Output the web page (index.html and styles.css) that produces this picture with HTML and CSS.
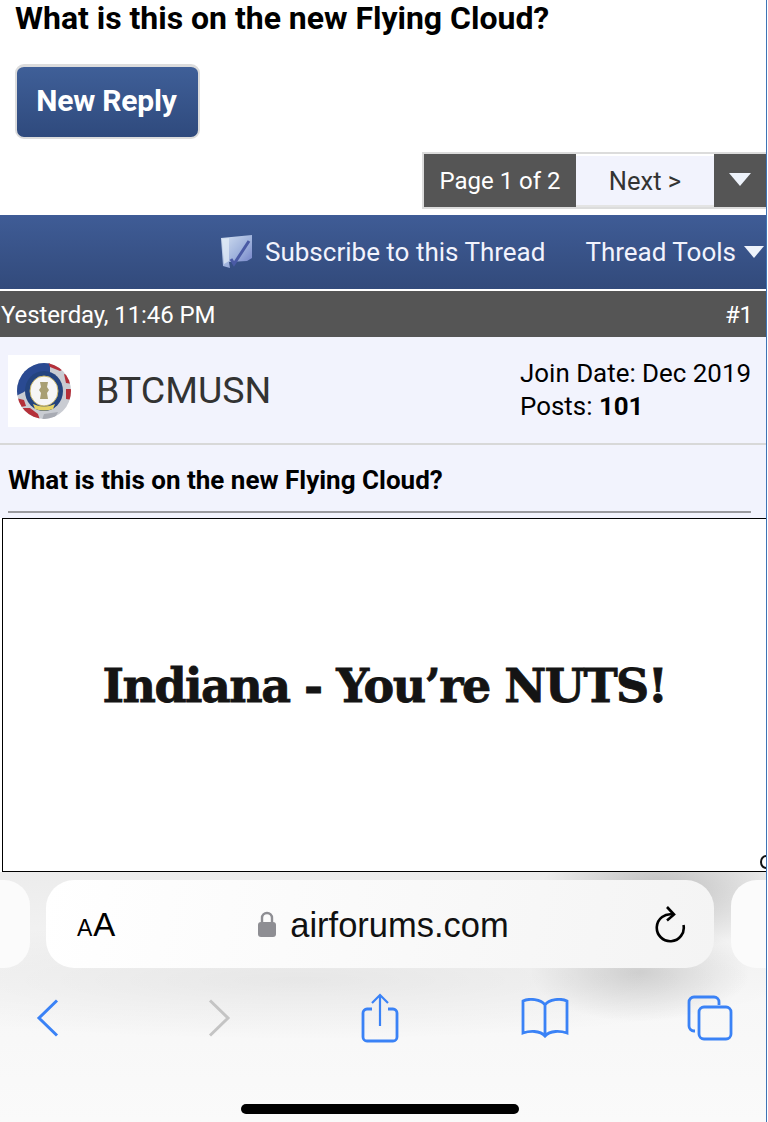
FILE: index.html
```html
<!DOCTYPE html>
<html lang="en">
<head>
<meta charset="utf-8">
<title>What is this on the new Flying Cloud?</title>
<link rel="stylesheet" href="styles.css">
</head>
<body>
<div class="page">
  <main class="forum">
    <h1 class="thread-title">What is this on the new Flying Cloud?</h1>
    <div class="reply-row"><a class="reply-btn">New Reply</a></div>
    <div class="pager-row">
      <div class="pager">
        <span class="pager-count">Page 1 of 2</span>
        <span class="pager-next">Next &gt;</span>
        <span class="pager-menu"><i class="tri"></i></span>
      </div>
    </div>
    <div class="toolbar">
      <svg class="sub-icon" width="34" height="34" viewBox="0 0 34 34">
        <defs><linearGradient id="sg" x1="0" y1="0" x2="1" y2="1"><stop offset="0" stop-color="#d5e2f2"/><stop offset=".55" stop-color="#9fb2dc"/><stop offset="1" stop-color="#6a78c4"/></linearGradient></defs>
        <path d="M1 3 L32 0 L32 23 L27 26 L9 27 L10 33 L3 31 Z" fill="url(#sg)"/>
        <path d="M2 4 L9 3 L9 26 L4 29 Z" fill="#e4eef8" opacity=".7"/>
        <path d="M11 24 L14 29 L29 6" fill="none" stroke="#4a5aa4" stroke-width="3"/>
      </svg>
      <span class="sub-text">Subscribe to this Thread</span>
      <span class="tools-text">Thread Tools</span>
      <i class="tri tri-small"></i>
    </div>
    <div class="post-head"><span>Yesterday, 11:46 PM</span><span class="post-num">#1</span></div>
    <section class="post">
      <div class="user-row">
        <div class="avatar">
          <svg class="coin" width="56" height="58" viewBox="0 0 56 58">
            <defs><clipPath id="cc"><ellipse cx="28" cy="29" rx="27" ry="28"/></clipPath></defs>
            <g clip-path="url(#cc)">
              <rect width="56" height="58" fill="#c9ccd2"/>
              <path d="M0 0H34V10L20 18L8 30L0 34Z" fill="#2a4a92"/>
              <path d="M32 0L46 0L50 6L44 9L34 5Z" fill="#b5303a"/>
              <path d="M48 12L56 14V22L50 21Z" fill="#b5303a"/>
              <path d="M50 27L56 27V38L50 37Z" fill="#b5303a"/>
              <path d="M0 36L8 38L10 44L0 46Z" fill="#b5303a"/>
              <path d="M6 46L14 46L22 52L24 58H12Z" fill="#b5303a"/>
              <path d="M28 52L42 50L38 58H26Z" fill="#a8abb3"/>
            </g>
            <ellipse cx="28" cy="29" rx="19" ry="20" fill="#24447f"/>
            <ellipse cx="28" cy="29" rx="14" ry="15" fill="#f6f6f6" stroke="#c9b66a"/>
            <path d="M24 20h8l-1 5 2 3-2 3 1 6h-8l1-6-2-3 2-3z" fill="#a89f73"/>
            <path d="M17 42q11 5 22 0l-2 5q-9 3-18 0z" fill="#e6d364"/>
          </svg>
        </div>
        <span class="username">BTCMUSN</span>
        <div class="user-meta">
          <div>Join Date: Dec 2019</div>
          <div>Posts: <b>101</b></div>
        </div>
      </div>
      <div class="post-body">
        <h2 class="post-title">What is this on the new Flying Cloud?</h2>
        <div class="post-rule"></div>
      </div>
    </section>
    <div class="embed"><p class="embed-text">Indiana - You’re NUTS!</p><i class="embed-dot"></i></div>
  </main>
  <footer class="chrome">
    <div class="tabs">
      <div class="tab-side tab-left"></div>
      <div class="urlbar">
        <span class="aa"><small>A</small>A</span>
        <span class="url">
          <svg width="18" height="28" viewBox="0 0 18 28"><path d="M4 13V8a5 5 0 0 1 10 0v5" fill="none" stroke="#8e8e93" stroke-width="2.4"/><rect x="0" y="12" width="18" height="15" rx="3" fill="#8e8e93"/></svg>
          <span class="url-text">airforums.com</span>
        </span>
        <svg class="reload" width="32" height="38" viewBox="0 0 32 38"><path d="M19 9.500A13.500 13.500 0 1 0 29.500 20" fill="none" stroke="#000" stroke-width="2.600"/><path d="M13 2l7 7.500-7 6" fill="none" stroke="#000" stroke-width="2.600"/></svg>
      </div>
      <div class="tab-side tab-right"></div>
    </div>
    <nav class="navbar">
      <svg width="24" height="38" viewBox="0 0 24 38"><path d="M21 1.500L3 19l18 17.500" fill="none" stroke="#3a82f6" stroke-width="3"/></svg>
      <svg class="nav-fwd" width="24" height="38" viewBox="0 0 24 38"><path d="M3 1.500L21 19 3 36.500" fill="none" stroke="#c4c4c4" stroke-width="3"/></svg>
      <svg class="nav-share" width="38" height="50" viewBox="0 0 38 50"><path d="M11 16H6a4 4 0 0 0-4 4v24a4 4 0 0 0 4 4h26a4 4 0 0 0 4-4V20a4 4 0 0 0-4-4h-5" fill="none" stroke="#3a82f6" stroke-width="2.800"/><path d="M19 33V2M11 10l8-8 8 8" fill="none" stroke="#3a82f6" stroke-width="2.200"/></svg>
      <svg class="nav-book" width="48" height="40" viewBox="0 0 48 40"><path d="M24 7C20 1 8 0 2 3v32c6-2 17-3 22 3 5-6 16-5 22-3V3C40 0 28 1 24 7zM24 7v31" fill="none" stroke="#3a82f6" stroke-width="2.800"/></svg>
      <svg class="nav-tabs" width="46" height="46" viewBox="0 0 46 46"><path d="M8 36H7a5 5 0 0 1-5-5V7a5 5 0 0 1 5-5h20a5 5 0 0 1 5 5v3" fill="none" stroke="#3a82f6" stroke-width="2.800"/><rect x="12" y="12" width="32" height="32" rx="5" fill="none" stroke="#3a82f6" stroke-width="2.800"/></svg>
    </nav>
    <div class="home-bar"></div>
  </footer>
</div>
</body>
</html>
```
FILE: styles.css
```css
* { box-sizing: border-box; }
html, body { margin: 0; padding: 0; background: #fff; }
body { font-family: Roboto, "Liberation Sans", sans-serif; color: #000; }
.page { width: 767px; height: 1122px; border-right: 1px solid #3f74b5; overflow: hidden; display: flex; flex-direction: column; }
.forum { height: 872px; flex: none; display: flex; flex-direction: column; }
.thread-title { margin: 0; padding: 0 0 0 15px; height: 64px; font-size: 32px; line-height: 37px; font-weight: 700; letter-spacing: -0.02px; }
.reply-row { padding-left: 15px; height: 88px; flex: none; }
.reply-btn { display: flex; align-items: center; justify-content: center; width: 185px; height: 75px; padding: 0 2px 4px 0; border: 2px solid #dcdcdc; border-top-width: 3px; border-radius: 9px; background: linear-gradient(#3f5f98, #2f4a7d); color: #fff; font-size: 30px; font-weight: 700; letter-spacing: -0.2px; }
.pager-row { display: flex; justify-content: flex-end; height: 63px; flex: none; }
.pager { display: flex; width: 344px; height: 57px; border: 2px solid #dcdcdc; border-right: 0; font-size: 24px; }
.pager-count { width: 152px; background: #555; color: #fff; display: flex; align-items: center; justify-content: center; }
.pager-next { width: 138px; background: #f2f3fd; color: #333; font-size: 25.500px; display: flex; align-items: center; justify-content: center; border-top: 2px solid #fff; border-bottom: 2px solid #e4e4e4; }
.pager-menu { flex: 1; background: #555; display: flex; align-items: center; justify-content: center; padding-bottom: 2px; }
.tri { display: block; width: 0; height: 0; border-left: 11px solid transparent; border-right: 11px solid transparent; border-top: 13px solid #eef3fb; }
.tri-small { border-left-width: 10px; border-right-width: 10px; border-top-width: 12px; }
.toolbar { height: 74px; flex: none; display: flex; align-items: center; justify-content: flex-end; padding-right: 2px; background: linear-gradient(#3f5c96, #324a7b); color: #f2f3fd; font-size: 26px; }
.sub-icon { margin-right: 11px; }
.sub-text { margin-right: 40px; }
.tools-text { margin-right: 8px; }
.post-head { margin-top: 2px; height: 46px; flex: none; background: #555; color: #fff; font-size: 24px; letter-spacing: -0.1px; display: flex; align-items: center; justify-content: space-between; padding: 1px 13px 0 1px; }
.post { background: #f2f3fd; height: 181px; flex: none; }
.user-row { height: 108px; display: flex; align-items: center; padding: 2px 15px 0 8px; border-bottom: 2px solid #d8d8d8; }
.avatar { width: 72px; height: 72px; background: #fff; display: flex; align-items: center; justify-content: center; flex: none; }
.coin { filter: blur(0.5px); }
.username { margin: 0 0 2px 16px; font-size: 37.500px; color: #333; flex: 1; }
.user-meta { font-size: 25.900px; line-height: 33px; margin-bottom: 3px; }
.user-meta b { font-weight: 700; }
.post-body { padding: 19px 15px 0 8px; }
.post-title { margin: 0; font-size: 26px; line-height: 32px; font-weight: 700; }
.post-rule { margin-top: 15px; height: 2px; background: #9a9a9f; }
.embed { position: relative; margin-left: 2px; flex: 1; border: 1px solid #000; border-right: 0; background: #fff; display: flex; align-items: center; justify-content: center; padding: 0 0 18px 0; }
.embed-text { margin: 0; font-family: "DejaVu Serif", serif; font-weight: 700; font-size: 46px; letter-spacing: -1.5px; color: #141414; -webkit-text-stroke: 0.8px #141414; }
.embed-dot { position: absolute; right: -6px; bottom: 2px; width: 12px; height: 14px; border: 2px solid #111; border-radius: 50%; }
.chrome { flex: 1; display: flex; flex-direction: column; background:
  radial-gradient(ellipse 120px 60px at 660px 20px, rgba(0,0,0,.2), transparent),
  radial-gradient(ellipse 110px 50px at 640px 100px, rgba(0,0,0,.14), transparent),
  radial-gradient(ellipse 500px 60px at 300px 108px, rgba(0,0,0,.06), transparent),
  linear-gradient(#ececec, #f7f7f7 50%, #fafafa); }
.tabs { display: flex; justify-content: space-between; height: 88px; margin-top: 8px; flex: none; }
.tab-side { width: 30px; background: #fbfbfb; }
.tab-left { border-radius: 0 26px 26px 0; }
.tab-right { width: 35px; border-radius: 26px 0 0 26px; }
.urlbar { width: 668px; margin-left: 16px; margin-right: 17px; flex: none; display: flex; align-items: center; justify-content: space-between; padding: 0 28px 0 31px; border-radius: 28px; background: linear-gradient(100deg, #fff, #f4f4f4); }
.aa { font-size: 33px; font-family: "Liberation Sans", sans-serif; line-height: 1; letter-spacing: 1px; width: 42px; white-space: nowrap; }
.aa small { font-size: 23px; }
.url { display: flex; align-items: center; gap: 14px; font-size: 34.500px; color: #111; margin-right: 6px; font-family: "Liberation Sans", sans-serif; }
.url-text { padding-top: 3px; }
.reload { display: block; }
.navbar { display: flex; align-items: center; height: 100px; padding-left: 36px; flex: none; }
.nav-fwd { margin-left: 147px; }
.nav-share { margin-left: 130px; }
.nav-book { margin-left: 122px; }
.nav-tabs { margin-left: 118px; }
.home-bar { width: 278px; height: 10px; border-radius: 5px; background: #000; margin: 36px 0 0 241px; flex: none; }
```
